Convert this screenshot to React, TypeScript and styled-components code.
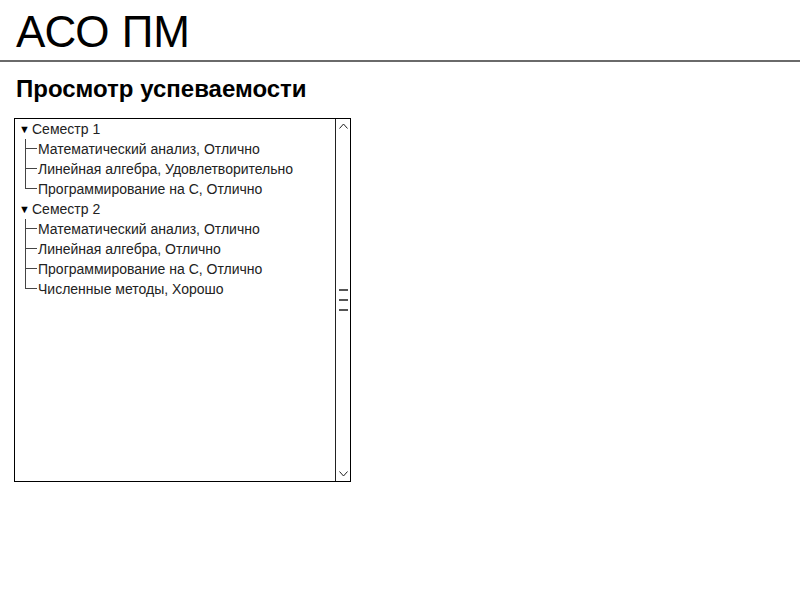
import React from "react";
import styled, { createGlobalStyle } from "styled-components";

const Global = createGlobalStyle`
  html, body { margin: 0; padding: 0; background: #fff; }
  body { font-family: "Liberation Sans", Arial, sans-serif; color: #000; }
`;

const Page = styled.div`
  width: 800px;
  height: 600px;
  display: flex;
  flex-direction: column;
`;

const Header = styled.header`
  height: 60px;
  border-bottom: 2px solid #6a6a6a;
  display: flex;
  align-items: center;
  padding-left: 16px;
`;

const Logo = styled.h1`
  margin: 0;
  font-size: 44px;
  font-weight: normal;
  line-height: 1;
  position: relative;
  top: 2px;
`;

const Title = styled.h2`
  margin: 13px 0 0 16px;
  font-size: 24px;
  font-weight: bold;
  line-height: 28px;
`;

const TreeBox = styled.div`
  margin: 15px 0 0 14px;
  width: 337px;
  height: 364px;
  box-sizing: border-box;
  border: 1px solid #000;
  display: flex;
`;

const TreeList = styled.ul`
  list-style: none;
  margin: 0;
  padding: 0;
  flex: 1;
  font-size: 14px;
`;

const Row = styled.li`
  height: 20px;
  display: flex;
  align-items: center;
  white-space: nowrap;
  color: #222;
`;

const Toggle = styled.span`
  width: 17px;
  display: flex;
  justify-content: flex-end;
  padding-right: 2px;
  box-sizing: border-box;
  font-size: 11px;
  color: #000;
`;

const Branch = styled.span<{ last?: boolean }>`
  width: 23px;
  height: 20px;
  position: relative;
  flex: none;
  &::before {
    content: "";
    position: absolute;
    left: 10px;
    top: 0;
    height: ${(p) => (p.last ? "10px" : "20px")};
    border-left: 1px solid #444;
  }
  &::after {
    content: "";
    position: absolute;
    left: 10px;
    top: 9px;
    width: 12px;
    border-top: 1px solid #444;
  }
`;

const Scrollbar = styled.div`
  width: 14px;
  border-left: 1px solid #222;
  display: flex;
  flex-direction: column;
  align-items: center;
`;

const Arrow = styled.div`
  height: 14px;
  width: 100%;
  display: flex;
  align-items: center;
  justify-content: center;
`;

const Thumb = styled.div`
  flex: 1;
  width: 100%;
  display: flex;
  flex-direction: column;
  align-items: center;
  justify-content: center;
  gap: 8px;
`;

const Grip = styled.div`
  width: 9px;
  height: 2px;
  background: #555;
`;

const semesters = [
  {
    name: "Семестр 1",
    items: [
      "Математический анализ, Отлично",
      "Линейная алгебра, Удовлетворительно",
      "Программирование на С, Отлично",
    ],
  },
  {
    name: "Семестр 2",
    items: [
      "Математический анализ, Отлично",
      "Линейная алгебра, Отлично",
      "Программирование на С, Отлично",
      "Численные методы, Хорошо",
    ],
  },
];

export default function App() {
  return (
    <Page>
      <Global />
      <Header>
        <Logo>АСО ПМ</Logo>
      </Header>
      <Title>Просмотр успеваемости</Title>
      <TreeBox>
        <TreeList>
          {semesters.map((s) => (
            <React.Fragment key={s.name}>
              <Row>
                <Toggle>▼</Toggle>
                {s.name}
              </Row>
              {s.items.map((it, i) => (
                <Row key={it + i}>
                  <Branch last={i === s.items.length - 1} />
                  {it}
                </Row>
              ))}
            </React.Fragment>
          ))}
        </TreeList>
        <Scrollbar>
          <Arrow>
            <svg width="9" height="6" viewBox="0 0 9 6">
              <path d="M0.5 5.5 L4.5 1 L8.5 5.5" fill="none" stroke="#222" strokeWidth="1" />
            </svg>
          </Arrow>
          <Thumb>
            <Grip />
            <Grip />
            <Grip />
          </Thumb>
          <Arrow>
            <svg width="9" height="6" viewBox="0 0 9 6">
              <path d="M0.5 0.5 L4.5 5 L8.5 0.5" fill="none" stroke="#222" strokeWidth="1" />
            </svg>
          </Arrow>
        </Scrollbar>
      </TreeBox>
    </Page>
  );
}
